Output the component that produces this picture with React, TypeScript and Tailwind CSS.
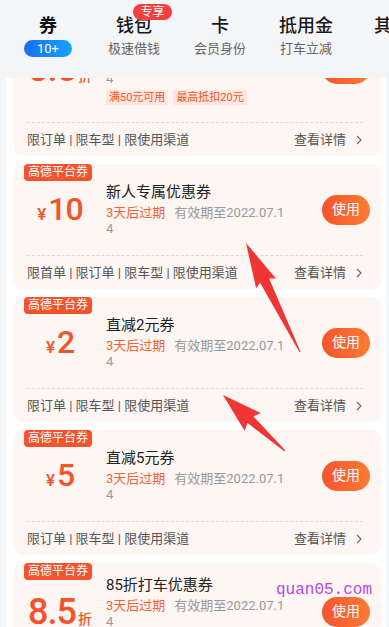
import React from 'react'

type Coupon = {
    title: string
    amount: string
    unit?: string
    limits: string
    tags?: string[]
}

const coupons: Coupon[] = [
    { title: '新人专属优惠券', amount: '10', limits: '限首单 | 限订单 | 限车型 | 限使用渠道' },
    { title: '直减2元券', amount: '2', limits: '限订单 | 限车型 | 限使用渠道' },
    { title: '直减5元券', amount: '5', limits: '限订单 | 限车型 | 限使用渠道' },
    { title: '85折打车优惠券', amount: '8.5', unit: '折', limits: '限订单 | 限车型 | 限使用渠道', tags: ['满50元可用', '最高抵扣20元'] },
]

const tabs = [
    { title: '钱包', sub: '极速借钱' },
    { title: '卡', sub: '会员身份' },
    { title: '抵用金', sub: '打车立减' },
    { title: '其他', sub: '' },
]

function Chevron() {
    return (
        <svg width="6" height="10" viewBox="0 0 6 10" className="ml-[10px]">
            <polyline points="1,1 5,5 1,9" fill="none" stroke="#666" strokeWidth="1.1" />
        </svg>
    )
}

function CouponCard({ c, first }: { c: Coupon; first?: boolean }) {
    return (
        <div className={`relative rounded-[9px] bg-[#fdf6f3] ${first ? '-mt-[53px]' : ''}`}>
            <div className="absolute left-[10px] top-0 h-[17px] px-[4px] rounded-[4px] bg-[#f4532c] text-white text-[12px] leading-[17px]">
                高德平台券
            </div>
            <div className={`flex items-center min-h-[91px] ${first ? 'pt-[7px] pb-[17px]' : 'py-3'}`}>
                <div className="w-[92px] shrink-0 flex items-baseline justify-center text-[#f4532c]">
                    {c.unit ? (
                        <>
                            <span className="text-[36px] leading-[36px] font-medium tracking-[-1px]">{c.amount}</span>
                            <span className="text-[14px] font-medium ml-[2px]">{c.unit}</span>
                        </>
                    ) : (
                        <>
                            <span className="text-[17px] font-medium mr-[2px]">¥</span>
                            <span className="text-[32px] leading-[36px] font-medium tracking-[-1px]">{c.amount}</span>
                        </>
                    )}
                </div>
                <div className="flex-1 min-w-0">
                    <div className="text-[15px] leading-[20px] text-[#222]">{c.title}</div>
                    <div className="mt-[3px] w-[180px] text-[13px] leading-[16px] break-all">
                        <span className="text-[#f4623a]">3天后过期</span>
                        <span className="ml-[9px] text-[#999]">有效期至2022.07.14</span>
                    </div>
                    {c.tags && (
                        <div className="flex gap-[5px] mt-[3px]">
                            {c.tags.map(t => (
                                <span key={t} className="h-[15px] px-[3px] bg-[#fde7de] text-[#f4532c] text-[11px] leading-[15px]">
                                    {t}
                                </span>
                            ))}
                        </div>
                    )}
                </div>
                <button className="mr-[11px] w-[48px] h-[30px] shrink-0 rounded-full bg-gradient-to-r from-[#f4532c] to-[#ff7a35] text-white text-[14px]">
                    使用
                </button>
            </div>
            <div className="ml-[13px] mr-[18px] border-t border-dashed border-[#e3d9d4]" />
            <div className="flex items-center justify-between h-[33px] pl-[13px] pr-[19px] text-[13px] text-[#555]">
                <span>{c.limits}</span>
                <span className="flex items-center">查看详情<Chevron /></span>
            </div>
        </div>
    )
}

export default function App() {
    return (
        <div className="relative w-[389px] h-[627px] overflow-hidden bg-[#f4f5f7] font-['Roboto','Noto_Sans_CJK_SC',sans-serif]">
            <div className="flex h-[78px] pl-[5px]">
                <div className="w-[86px] shrink-0 flex flex-col items-center pt-[14px]">
                    <span className="text-[18px] leading-[24px] font-bold text-[#111]">券</span>
                    <span className="mt-[2px] h-[17px] w-[48px] rounded-full bg-gradient-to-r from-[#1a6ff5] to-[#18a3ff] text-white text-[13px] leading-[17px] text-center">
                        10+
                    </span>
                </div>
                {tabs.map((t, i) => (
                    <div key={t.title} className="relative w-[86px] shrink-0 flex flex-col items-center pt-[14px]">
                        <span className="text-[18px] leading-[24px] font-medium text-[#1a1a1a] whitespace-nowrap">{t.title}</span>
                        <span className="mt-[2px] text-[13px] leading-[18px] text-[#666]">{t.sub}</span>
                        {i === 0 && (
                            <span className="absolute left-[42px] top-[4px] h-[16px] w-[39px] rounded-full bg-[#f43f3f] text-white text-[12px] leading-[16px] text-center">
                                专享
                            </span>
                        )}
                    </div>
                ))}
            </div>
            <div className="ml-[6px] mr-[3px] h-[549px] overflow-hidden bg-white pl-2 pr-[5px]">
                <div className="flex flex-col gap-2">
                    <CouponCard first c={coupons[3]} />
                    {coupons.map(c => (
                        <CouponCard key={c.title} c={c} />
                    ))}
                </div>
            </div>

            <svg className="absolute inset-0 pointer-events-none" width="389" height="627">
                <polygon
                    fill="#f03535"
                    points="246,243 275.9,278.4 269.1,278.4 300.5,351.8 299.5,352.2 260.1,282.8 256.1,288.2"
                />
                <polygon
                    fill="#f03535"
                    points="223,395 260.7,412.9 253.5,416.5 285.4,450.6 284.6,451.4 247.5,423.1 244.6,430.7"
                />
            </svg>
            <div className="absolute left-[276px] top-[580px] text-[16px] leading-[20px] text-[#b347ec] font-['Liberation_Mono',monospace]">
                quan05.com
            </div>
        </div>
    )
}
